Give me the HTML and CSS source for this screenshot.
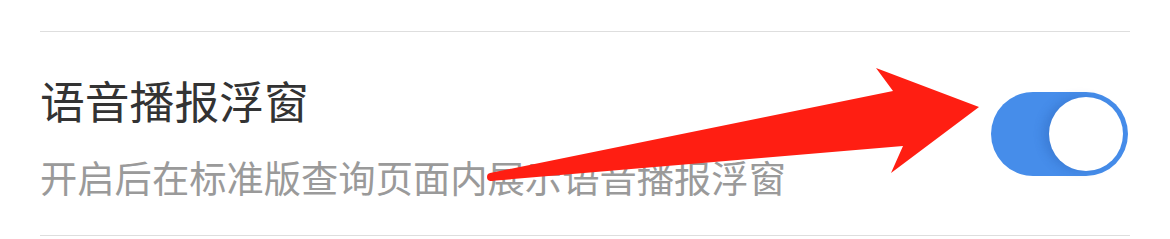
FILE: index.html
```html
<!DOCTYPE html>
<html lang="zh-CN">
<head>
	<meta charset="UTF-8">
	<meta name="viewport" content="width=device-width, initial-scale=1.0">
	<title>语音播报浮窗</title>
	<link rel="stylesheet" href="styles.css">
</head>
<body>

	<div class="page">
		<!-- Setting row -->
		<div class="setting">
			<div class="setting-text">
				<div class="setting-title">语音播报浮窗</div>
				<div class="setting-desc">开启后在标准版查询页面内展示语音播报浮窗</div>
			</div>

			<!-- Switch (on) -->
			<div class="switch on">
				<div class="knob"></div>
			</div>
		</div>

		<!-- Red annotation arrow -->
		<svg class="arrow" width="1170" height="239" viewBox="0 0 1170 239">
			<polygon fill="#ff1e12" points="490,173 893,91 876,68 979,107 891,173 903,146 490,181"/>
			<circle fill="#ff1e12" cx="491" cy="177" r="4"/>
		</svg>
	</div>

</body>
</html>
```

FILE: styles.css
```css
body {
	margin: 0;
	padding: 0;
	background-color: #fff;
	font-family: "Noto Sans CJK SC", "Noto Sans", sans-serif;
}

.page {
	position: relative;
	width: 1170px;
	height: 239px;
	overflow: hidden;
}

.setting {
	margin: 31px 40px 0;
	border-top: 1px solid #dedede;
	border-bottom: 1px solid #dedede;
	padding-right: 2px;
	display: flex;
	align-items: center;
	justify-content: space-between;
}

.setting-text {
	padding: 46px 0 39px;
}

.setting-title {
	font-size: 44.8px;
	line-height: 44px;
	color: #333;
}

.setting-desc {
	margin-top: 37px;
	font-size: 37.3px;
	line-height: 37px;
	color: #9a9a9a;
}

.switch {
	width: 137px;
	height: 84px;
	border-radius: 42px;
	background-color: #dcdcdc;
	display: flex;
	align-items: center;
	padding: 0 5px;
	box-sizing: border-box;
}

.switch.on {
	background-color: #468dea;
	justify-content: flex-end;
}

.knob {
	width: 74px;
	height: 74px;
	border-radius: 50%;
	background-color: #fff;
	box-shadow: -6px 0 10px rgba(30, 80, 160, 0.25);
}

.arrow {
	position: absolute;
	left: 0;
	top: 0;
}
```
